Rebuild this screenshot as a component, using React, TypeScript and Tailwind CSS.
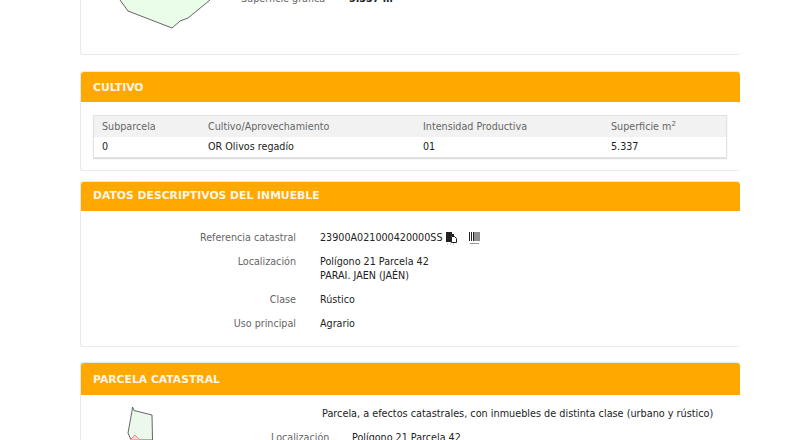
const fontStack = "font-['DejaVu_Sans',Verdana,sans-serif]";

function Panel({ title, headerClass, children }: { title: string; headerClass: string; children: React.ReactNode }) {
  return (
    <section className="rounded-[3px] border border-[#e9e9e9] border-r-0 bg-white">
      <h2 className={`flex items-center rounded-t-[3px] bg-[#ffa800] pl-3 text-[10.8px] font-bold text-[#fdf6e6] ${headerClass}`}>{title}</h2>
      {children}
    </section>
  );
}

function Row({ label, children }: { label: string; children: React.ReactNode }) {
  return (
    <div className="flex">
      <div className="w-[215px] text-right text-[#666]">{label}</div>
      <div className="pl-[24px] text-[#222]">{children}</div>
    </div>
  );
}

function CopyIcon() {
  return (
    <svg width="11" height="13" viewBox="0 0 11 13" className="ml-[3px]">
      <path d="M0 0h6v2h2v2H5v6H0z" fill="#222" />
      <path d="M5.5 4.5h3l2 2v4h-5z" fill="#fff" stroke="#222" />
      <path d="M1 12h1M4 12h1M7 12h1" stroke="#aaa" />
    </svg>
  );
}

function BarcodeIcon() {
  return (
    <svg width="11" height="13" viewBox="0 0 11 13" className="ml-[12px]">
      <path d="M.5 0v9M2.5 0v9M4.5 0v9M6 0v9M8 0v9M10 0v9" stroke="#222" />
      <path d="M1 11.5h9" stroke="#999" />
    </svg>
  );
}

export default function App() {
  return (
    <div className={`h-[440px] w-[790px] overflow-hidden bg-white pl-[80px] pr-[50px] text-[9.6px] ${fontStack}`}>
      <section className="relative h-[55px] rounded-b-[3px] border border-t-0 border-r-0 border-[#e9e9e9]">
        <div className="flex">
          <svg width="110" height="30" viewBox="0 0 110 30" className="ml-[30px] shrink-0">
            <path d="M9 0L17 11L61 28L69 21L77 18L99 0Z" fill="#e9fde9" />
            <path d="M9 0L17 11L61 28L69 21L77 18L99 0" fill="none" stroke="#555" strokeWidth="0.9" />
          </svg>
          <div className="ml-[20px] -mt-[8px] flex text-[#666]">
            <span className="w-[108px]">Superficie gráfica</span>
            <span className="font-bold text-[#222]">5.337 m²</span>
          </div>
        </div>
      </section>

      <div className="mt-4">
        <Panel title="CULTIVO" headerClass="h-[30px] pt-[2px]">
          <div className="pt-[13px] pr-[13px] pb-[12px] pl-3">
            <div className="border border-[#e2e2e2] shadow-[0_1px_1px_#ddd]">
              <div className="flex h-[21px] items-center bg-[#f2f2f2] pt-px text-[#666]">
                <span className="w-[106px] pl-2">Subparcela</span>
                <span className="w-[215px] pl-2">Cultivo/Aprovechamiento</span>
                <span className="w-[188px] pl-2">Intensidad Productiva</span>
                <span className="pl-2">Superficie m<sup className="text-[7px]">2</sup></span>
              </div>
              <div className="flex h-[20px] items-center text-[#222]">
                <span className="w-[106px] pl-2">0</span>
                <span className="w-[215px] pl-2">OR Olivos regadío</span>
                <span className="w-[188px] pl-2">01</span>
                <span className="pl-2">5.337</span>
              </div>
            </div>
          </div>
        </Panel>
      </div>

      <div className="mt-[10px]">
        <Panel title="DATOS DESCRIPTIVOS DEL INMUEBLE" headerClass="h-[29px]">
          <div className="flex h-[135px] flex-col gap-[10px] pt-[20px] leading-[14px]">
            <Row label="Referencia catastral">
              <span className="flex items-center">23900A021000420000SS<CopyIcon /><BarcodeIcon /></span>
            </Row>
            <Row label="Localización">
              Polígono 21 Parcela 42<br />PARAI. JAEN (JAÉN)
            </Row>
            <Row label="Clase">Rústico</Row>
            <Row label="Uso principal">Agrario</Row>
          </div>
        </Panel>
      </div>

      <div className="mt-[15px]">
        <Panel title="PARCELA CATASTRAL" headerClass="h-[32px] pt-[2px]">
          <div className="flex">
            <svg width="40" height="38" viewBox="0 0 40 38" className="ml-[39px] mt-[7px] shrink-0">
              <path d="M12.5 5L14 8.5L32 13L32.5 38H11L8 31L12 9Z" fill="#ecf8ec" stroke="#555" strokeWidth="0.9" />
              <path d="M10 38L15 33L20 38Z" fill="#fbd4d4" stroke="#e88" />
            </svg>
            <div className="ml-[162px] pt-[12px] leading-[14px] text-[#222]">
              <div className="whitespace-nowrap text-[9.7px]">Parcela, a efectos catastrales, con inmuebles de distinta clase (urbano y rústico)</div>
              <div className="mt-[10px] -ml-[51px] flex whitespace-nowrap">
                <span className="w-[81px] text-[#666]">Localización</span>
                <span>Polígono 21 Parcela 42</span>
              </div>
            </div>
          </div>
        </Panel>
      </div>
    </div>
  );
}
